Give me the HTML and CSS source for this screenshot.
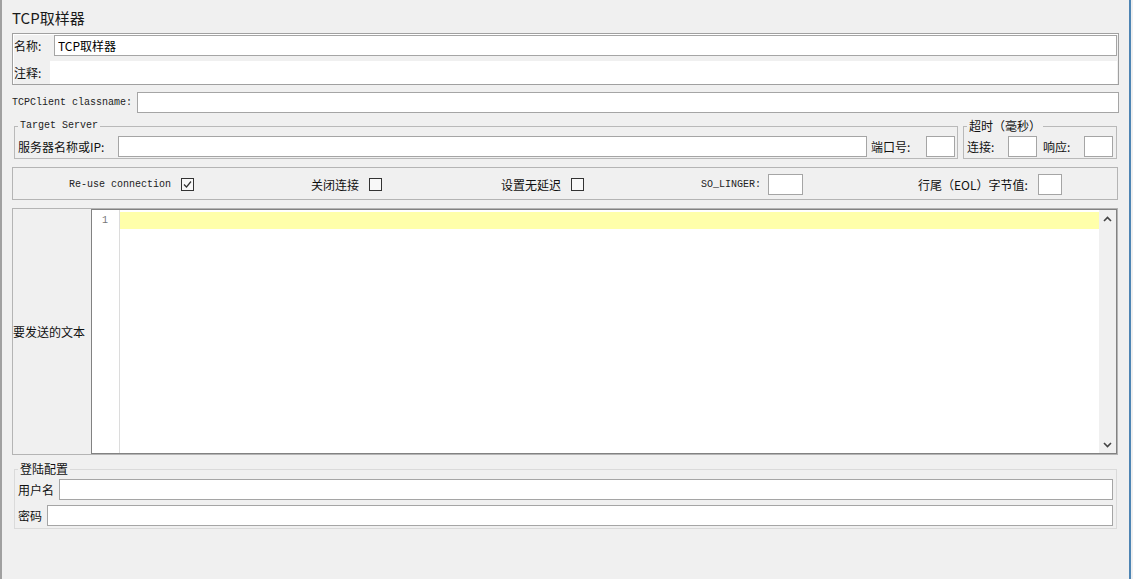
FILE: index.html
```html
<!DOCTYPE html>
<html lang="zh-CN">
<head>
<meta charset="UTF-8">
<title>TCP取样器</title>
<link rel="stylesheet" href="styles.css">
</head>
<body>

<div class="frame">
    <div class="title">TCP取样器</div>

    <div class="namebox">
        <div class="row">
            <label class="lbl w-name">名称:</label>
            <input type="text" class="field grow" value="TCP取样器">
        </div>
        <div class="row comment-row">
            <label class="lbl w-comment">注释:</label>
            <div class="comment"></div>
        </div>
    </div>

    <div class="row classname-row">
        <label class="mono w-class">TCPClient classname:</label>
        <input type="text" class="field grow">
    </div>

    <div class="server-row">
        <fieldset class="group server">
            <legend class="mono">Target Server</legend>
            <div class="row">
                <label class="lbl w-server">服务器名称或IP:</label>
                <input type="text" class="field grow">
                <label class="lbl w-port">端口号:</label>
                <input type="text" class="field small">
            </div>
        </fieldset>
        <fieldset class="group timeout">
            <legend>超时（毫秒）</legend>
            <div class="row">
                <label class="lbl w-conn">连接:</label>
                <input type="text" class="field small">
                <label class="lbl w-resp">响应:</label>
                <input type="text" class="field small">
            </div>
        </fieldset>
    </div>

    <div class="options">
        <div class="opt">
            <span class="mono">Re-use connection</span>
            <span class="box">
                <svg width="11" height="11" viewBox="0 0 11 11"><path d="M2 5.5 L4.5 8 L9 2.5" fill="none" stroke="#333" stroke-width="1.2"/></svg>
            </span>
        </div>
        <div class="opt">
            <span>关闭连接</span>
            <span class="box"></span>
        </div>
        <div class="opt">
            <span>设置无延迟</span>
            <span class="box"></span>
        </div>
        <div class="opt tight">
            <span class="mono">SO_LINGER:</span>
            <input type="text" class="field linger">
        </div>
        <div class="opt">
            <span>行尾（EOL）字节值:</span>
            <input type="text" class="field eol">
        </div>
    </div>

    <div class="textpanel">
        <div class="tp-label">要发送的文本</div>
        <div class="editor">
            <div class="gutter"><div class="lineno">1</div></div>
            <div class="code"><div class="hl"></div></div>
            <div class="vscroll">
                <div class="arrow">
                    <svg width="9" height="6" viewBox="0 0 9 6"><path d="M1 5 L4.5 1.5 L8 5" fill="none" stroke="#444" stroke-width="1.6"/></svg>
                </div>
                <div class="arrow">
                    <svg width="9" height="6" viewBox="0 0 9 6"><path d="M1 1 L4.5 4.5 L8 1" fill="none" stroke="#444" stroke-width="1.6"/></svg>
                </div>
            </div>
        </div>
    </div>

    <fieldset class="group login">
        <legend>登陆配置</legend>
        <div class="row">
            <label class="lbl w-user">用户名</label>
            <input type="text" class="field grow">
        </div>
        <div class="row pass-row">
            <label class="lbl w-pass">密码</label>
            <input type="text" class="field grow">
        </div>
    </fieldset>
</div>

</body>
</html>
```

FILE: styles.css
```css
body {
    margin: 0;
    background-color: #f0f0f0;
    font-family: "Noto Sans CJK SC", sans-serif;
    font-size: 12px;
    line-height: 14px;
    color: #111;
    overflow: hidden;
}
.frame {
    width: 1131px;
    height: 579px;
    box-sizing: border-box;
    padding: 8px 10px 0 10px;
    border-left: 2px solid #a0a0a0;
    border-right: 2px solid #4d84b3;
    background-color: #f0f0f0;
}
.title {
    height: 20px;
    font-size: 15px;
    line-height: 20px;
    color: #1a1a1a;
}
.mono {
    font-family: "Liberation Mono", "Noto Sans CJK SC", monospace;
    font-size: 10px;
    color: #222;
}
.row {
    display: flex;
    align-items: center;
}
.lbl {
    flex: none;
    box-sizing: border-box;
}
.field {
    height: 21px;
    box-sizing: border-box;
    margin: 0;
    padding: 0 3px;
    border: 1px solid #a5a5a5;
    background-color: #fff;
    font-family: "Noto Sans CJK SC", sans-serif;
    font-size: 12px;
    color: #000;
    outline: none;
    min-width: 0;
}
.grow {
    flex: 1;
}
.small {
    flex: none;
    width: 29px;
}

/* name / comment */
.namebox {
    margin-top: 5px;
    padding: 1px 1px 0 1px;
    border: 1px solid #a0a0a0;
    box-shadow: inset 1px 1px 0 #fff;
}
.w-name { width: 40px; }
.w-comment { width: 36px; }
.comment-row {
    margin-top: 5px;
}
.comment {
    flex: 1;
    height: 23px;
    background-color: #fff;
}
.classname-row {
    margin-top: 7px;
}
.w-class {
    flex: none;
    width: 125px;
}

/* server + timeout */
.server-row {
    display: flex;
    gap: 5px;
    margin: 7px 2px 0 2px;
}
.group {
    margin: 0;
    padding: 4px 3px 1px 3px;
    border: 1px solid #b9b9b9;
    min-width: 0;
}
.group legend {
    padding: 0 2px;
    line-height: 12px;
}
.server {
    flex: 1;
    padding-right: 2px;
}
.timeout {
    flex: none;
    width: 154px;
    box-sizing: border-box;
}
.w-server { width: 100px; }
.w-port { width: 59px; padding-left: 4px; }
.w-conn { width: 41px; }
.w-resp { width: 47px; padding-left: 6px; }

/* options */
.options {
    display: grid;
    grid-template-columns: 242px 190px 200px 217px 1fr;
    align-items: center;
    height: 33px;
    box-sizing: border-box;
    margin: 8px 1px 0 0;
    padding: 2px 0 0 56px;
    border: 1px solid #b4b4b4;
}
.opt {
    display: flex;
    align-items: center;
    gap: 10px;
}
.opt.tight {
    gap: 7px;
}
.box {
    display: flex;
    align-items: center;
    justify-content: center;
    width: 13px;
    height: 13px;
    box-sizing: border-box;
    border: 1px solid #333;
    background-color: #f8f8f8;
}
.linger { width: 35px; }
.eol { width: 24px; }

/* text to send */
.textpanel {
    display: flex;
    height: 247px;
    box-sizing: border-box;
    margin: 8px 1px 0 0;
    border: 1px solid #b4b4b4;
}
.tp-label {
    flex: none;
    width: 78px;
    display: flex;
    align-items: center;
}
.editor {
    flex: 1;
    display: flex;
    border: 1px solid #828282;
    background-color: #fff;
}
.gutter {
    flex: none;
    width: 27px;
    border-right: 1px solid #dcdcdc;
}
.lineno {
    margin-top: 2px;
    height: 17px;
    line-height: 17px;
    padding-right: 11px;
    text-align: right;
    font-family: "Liberation Mono", monospace;
    font-size: 10px;
    color: #777;
}
.code {
    flex: 1;
    padding-top: 2px;
}
.hl {
    height: 17px;
    background-color: #ffffaa;
}
.vscroll {
    flex: none;
    width: 17px;
    display: flex;
    flex-direction: column;
    justify-content: space-between;
    background-color: #f0f0f0;
}
.arrow {
    height: 17px;
    display: flex;
    align-items: center;
    justify-content: center;
}

/* login */
.login {
    margin: 7px 2px 0 2px;
    padding: 3px 3px 2px 3px;
    border: 1px solid #dadada;
}
.login legend {
    line-height: 14px;
}
.w-user { width: 41px; }
.w-pass { width: 29px; }
.pass-row {
    margin-top: 5px;
}
```
